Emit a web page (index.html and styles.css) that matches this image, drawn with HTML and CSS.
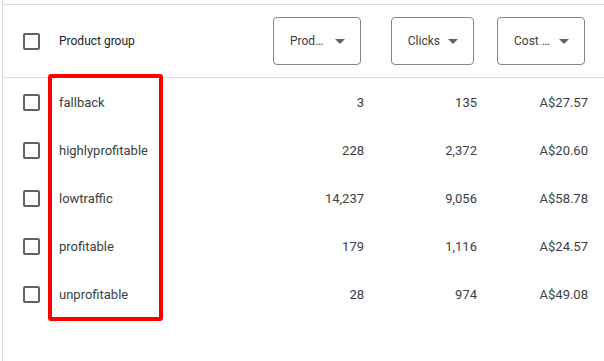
FILE: index.html
```html
<!DOCTYPE html>
<html>
<head>
<meta charset="utf-8">
<link rel="stylesheet" href="styles.css">
</head>
<body>
<div class="frame">
  <div class="table">
    <div class="row head">
      <div class="cell check"><span class="box"></span></div>
      <div class="cell name head-title">Product group</div>
      <div class="cell num"><button class="dd"><span class="label trunc">Prod…</span><span class="arrow"></span></button></div>
      <div class="cell num"><button class="dd"><span class="label">Clicks</span><span class="arrow"></span></button></div>
      <div class="cell num"><button class="dd"><span class="label trunc">Cost …</span><span class="arrow"></span></button></div>
    </div>
    <div class="row">
      <div class="cell check"><span class="box"></span></div>
      <div class="cell name">fallback</div>
      <div class="cell num">3</div>
      <div class="cell num">135</div>
      <div class="cell num">A$27.57</div>
    </div>
    <div class="row">
      <div class="cell check"><span class="box"></span></div>
      <div class="cell name">highlyprofitable</div>
      <div class="cell num">228</div>
      <div class="cell num">2,372</div>
      <div class="cell num">A$20.60</div>
    </div>
    <div class="row">
      <div class="cell check"><span class="box"></span></div>
      <div class="cell name">lowtraffic</div>
      <div class="cell num">14,237</div>
      <div class="cell num">9,056</div>
      <div class="cell num">A$58.78</div>
    </div>
    <div class="row">
      <div class="cell check"><span class="box"></span></div>
      <div class="cell name">profitable</div>
      <div class="cell num">179</div>
      <div class="cell num">1,116</div>
      <div class="cell num">A$24.57</div>
    </div>
    <div class="row">
      <div class="cell check"><span class="box"></span></div>
      <div class="cell name">unprofitable</div>
      <div class="cell num">28</div>
      <div class="cell num">974</div>
      <div class="cell num">A$49.08</div>
    </div>
  </div>
  <div class="highlight"></div>
</div>
</body>
</html>
```
FILE: styles.css
```css
html, body {
  margin: 0;
  background: #fff;
}
body {
  font-family: Roboto, "Liberation Sans", sans-serif;
  color: #3c4043;
}
.frame {
  position: relative;
  margin-left: 2px;
  border-left: 1px solid #dadce0;
  min-height: 100vh;
  padding-top: 4px;
  box-sizing: border-box;
}
.table {
  border-top: 1px solid #dadce0;
}
.row {
  display: grid;
  grid-template-columns: 56px 1fr 123px 113px 111px;
  height: 48px;
  align-items: center;
  font-size: 13px;
}
.row.head {
  height: 72px;
  border-bottom: 1px solid #dadce0;
}
.cell.check {
  padding-left: 20px;
  display: flex;
  align-items: center;
}
.box {
  display: block;
  width: 17px;
  height: 17px;
  box-sizing: border-box;
  border: 2px solid #5f6368;
  border-radius: 2px;
}
.head-title {
  font-size: 12px;
  font-weight: 400;
  color: #202124;
}
.cell.num {
  display: flex;
  justify-content: flex-end;
  padding-right: 16px;
}
.head .cell.num {
  padding-right: 19px;
}
.dd {
  display: flex;
  align-items: center;
  height: 48px;
  padding: 0 15px 0 16px;
  border: 1px solid #80868b;
  border-radius: 4px;
  background: #fff;
  font-family: Roboto, "Liberation Sans", sans-serif;
  font-size: 12px;
  color: #3c4043;
  gap: 8px;
  box-sizing: border-box;
}
.label {
  white-space: nowrap;
  text-align: left;
}
.label.trunc {
  width: 37px;
}
.arrow {
  width: 0;
  height: 0;
  border-left: 5px solid transparent;
  border-right: 5px solid transparent;
  border-top: 5px solid #5f6368;
}
.highlight {
  position: absolute;
  left: 45px;
  top: 74px;
  width: 115px;
  height: 247px;
  box-sizing: border-box;
  border: 4px solid #ff0000;
  border-radius: 3px;
}
```
